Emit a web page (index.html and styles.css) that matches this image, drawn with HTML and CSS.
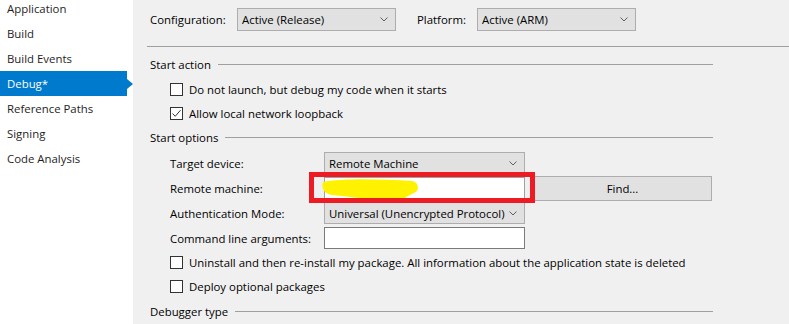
FILE: index.html
```html
<!DOCTYPE html>
<html>
<head>
<meta charset="utf-8">
<link rel="stylesheet" href="styles.css">
</head>
<body>
<div class="app">
  <nav class="sidebar">
    <ul class="nav">
      <li>Application</li>
      <li>Build</li>
      <li>Build Events</li>
      <li class="active">Debug*</li>
      <li>Reference Paths</li>
      <li>Signing</li>
      <li>Code Analysis</li>
    </ul>
  </nav>
  <main class="main">
    <div class="toolbar">
      <span class="tb-label cfg">Configuration:</span>
      <div class="combo tb-combo"><span>Active (Release)</span><svg class="chev" width="8" height="5" viewBox="0 0 8 5"><path d="M0.5 0.5 L4 4 L7.5 0.5" /></svg></div>
      <span class="tb-label plat">Platform:</span>
      <div class="combo tb-combo"><span>Active (ARM)</span><svg class="chev" width="8" height="5" viewBox="0 0 8 5"><path d="M0.5 0.5 L4 4 L7.5 0.5" /></svg></div>
    </div>
    <div class="sep"></div>
    <section class="group">
      <div class="heading h-first"><span>Start action</span><i class="rule"></i></div>
      <div class="check-row cr-first"><span class="cb"></span><span>Do not launch, but debug my code when it starts</span></div>
      <div class="check-row"><span class="cb"><svg width="11" height="11" viewBox="0 0 11 11"><path d="M1.5 5.5 L4.2 8.3 L9.5 2.2" /></svg></span><span>Allow local network loopback</span></div>

      <div class="heading h-second"><span>Start options</span><i class="rule"></i></div>
      <div class="fields">
        <span class="f-label">Target device:</span>
        <div class="combo field"><span>Remote Machine</span><svg class="chev" width="8" height="5" viewBox="0 0 8 5"><path d="M0.5 0.5 L4 4 L7.5 0.5" /></svg></div>
        <span></span>

        <span class="f-label">Remote machine:</span>
        <div class="textbox field remote">
          <svg class="scribble" width="100" height="26" viewBox="0 0 100 26"><path d="M1 4 C 20 0, 60 1, 90 3 C 97 4, 98 13, 92 15 C 86 17, 82 22, 72 23 C 62 24, 40 20, 10 17 C 2 16, -1 10, 1 4 Z" /></svg>
          <span class="redbox"></span>
        </div>
        <button class="find">Find...</button>

        <span class="f-label">Authentication Mode:</span>
        <div class="combo field"><span>Universal (Unencrypted Protocol)</span><svg class="chev" width="8" height="5" viewBox="0 0 8 5"><path d="M0.5 0.5 L4 4 L7.5 0.5" /></svg></div>
        <span></span>

        <span class="f-label">Command line arguments:</span>
        <div class="textbox field"></div>
        <span></span>
      </div>
      <div class="check-row cr-after"><span class="cb"></span><span>Uninstall and then re-install my package. All information about the application state is deleted</span></div>
      <div class="check-row"><span class="cb"></span><span>Deploy optional packages</span></div>

      <div class="heading h-third"><span>Debugger type</span><i class="rule"></i></div>
    </section>
  </main>
</div>
</body>
</html>
```
FILE: styles.css
```css
* { box-sizing: border-box; }
html, body { margin: 0; padding: 0; }
body {
  width: 789px;
  height: 324px;
  overflow: hidden;
  font-family: "Open Sans", "Noto Sans", sans-serif;
  font-size: 11.4px;
  color: #000;
  background: #f0f0f0;
}
.app {
  display: flex;
  height: 324px;
}
.sidebar {
  width: 133px;
  flex: 0 0 133px;
  background: #fff;
}
.nav {
  list-style: none;
  margin: -4px 0 0 0;
  padding: 0;
}
.nav li {
  height: 25px;
  line-height: 25px;
  padding-left: 7px;
  width: 127px;
  color: #1e1e1e;
  white-space: nowrap;
}
.nav li.active {
  background: #007acc;
  color: #fff;
  position: relative;
}
.nav li.active::after {
  content: "";
  position: absolute;
  right: -6px;
  top: 8px;
  border-left: 6px solid #007acc;
  border-top: 5px solid transparent;
  border-bottom: 5px solid transparent;
}
.main {
  flex: 1;
  padding: 8px 0 0 14px;
  background: #f0f0f0;
}
.toolbar {
  display: flex;
  align-items: center;
  height: 23px;
  padding-left: 3px;
}
.tb-label { white-space: nowrap; }
.cfg { width: 87px; }
.plat { width: 60px; margin-left: 21px; }
.combo {
  display: flex;
  align-items: center;
  justify-content: space-between;
  background: #e1e1e1;
  border: 1px solid #adadad;
  padding: 0 7px 0 4px;
  white-space: nowrap;
}
.tb-combo {
  width: 159px;
  height: 23px;
}
.chev path {
  fill: none;
  stroke: #606060;
  stroke-width: 1;
}
.sep {
  height: 1px;
  background: #a0a0a0;
  margin-top: 15px;
}
.group {
  margin-left: 3px;
  width: 563px;
}
.heading {
  display: flex;
  align-items: center;
  height: 18px;
  white-space: nowrap;
}
.heading .rule {
  flex: 1;
  height: 1px;
  background: #a0a0a0;
  margin-left: 7px;
}
.h-first { margin-top: 8px; }
.h-second { margin-top: 3px; }
.h-third { margin-top: 4px; }
.check-row {
  display: flex;
  align-items: center;
  height: 24px;
  padding-left: 20px;
  white-space: nowrap;
}
.cr-first { margin-top: 4px; }
.cr-after { margin-top: 1px; }
.cb {
  width: 13px;
  height: 13px;
  border: 1px solid #333;
  background: #fff;
  margin-right: 6px;
  flex: 0 0 13px;
  display: flex;
  align-items: center;
  justify-content: center;
}
.cb svg path {
  fill: none;
  stroke: #333;
  stroke-width: 1;
}
.fields {
  display: grid;
  grid-template-columns: 154px 201px 187px;
  grid-auto-rows: 22px;
  row-gap: 3px;
  margin-top: 6px;
  padding-left: 20px;
  align-items: center;
}
.f-label { white-space: nowrap; }
.field {
  height: 22px;
}
.textbox {
  background: #fff;
  border: 1px solid #7a7a7a;
}
.remote {
  position: relative;
  border-color: #a0a0a0;
}
.scribble {
  position: absolute;
  left: -3px;
  top: 0px;
}
.scribble path { fill: #fff200; }
.redbox {
  position: absolute;
  left: -16px;
  top: -6px;
  width: 226px;
  height: 31px;
  border: 5px solid #ed1c24;
}
.find {
  margin-left: 8px;
  width: 179px;
  height: 25px;
  background: #e1e1e1;
  border: 1px solid #adadad;
  font-family: inherit;
  font-size: 11.4px;
  color: #000;
  padding: 0;
}
```
